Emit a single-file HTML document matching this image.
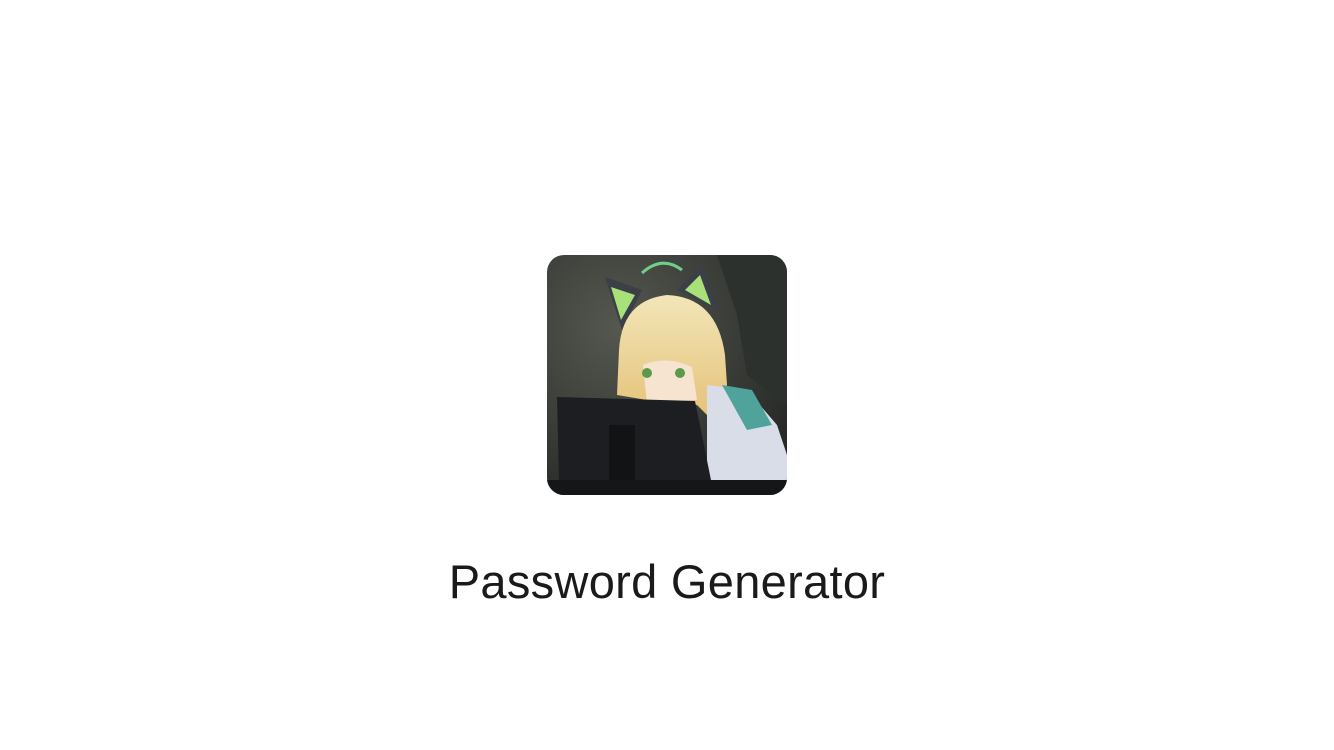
<!DOCTYPE html>
<html><head><style>
html,body{margin:0;padding:0;background:#fff;width:1334px;height:750px;overflow:hidden}
.icon{position:absolute;left:547px;top:255px;width:240px;height:240px;border-radius:17px;overflow:hidden}
.t{position:absolute;left:0;width:1334px;top:554px;text-align:center;font-family:"Liberation Sans",sans-serif;font-size:47px;color:#1a1a1a;font-weight:300;letter-spacing:0.3px}
</style></head><body>
<div class="icon"><svg width="240" height="240" viewBox="0 0 240 240">
<defs><radialGradient id="bg" cx="0.3" cy="0.3" r="0.9"><stop offset="0" stop-color="#55584f"/><stop offset="1" stop-color="#232524"/></radialGradient>
<linearGradient id="hair" x1="0" y1="0" x2="0" y2="1"><stop offset="0" stop-color="#f2e6b8"/><stop offset="1" stop-color="#e5c178"/></linearGradient></defs>
<rect width="240" height="240" fill="url(#bg)"/>
<path d="M170 0 L240 0 L240 150 L200 120 L190 60 Z" fill="#2c312e"/>
<path d="M95 18 Q115 0 135 15" stroke="#6fd08a" stroke-width="3" fill="none"/>
<path d="M58 22 L95 35 L75 75 Z" fill="#3a3f48"/><path d="M64 32 L88 40 L74 65 Z" fill="#a8e07a"/>
<path d="M130 35 L155 10 L172 55 Z" fill="#3a3f48"/><path d="M138 35 L153 20 L164 50 Z" fill="#a8e07a"/>
<path d="M72 95 Q75 45 120 40 Q170 42 178 100 L180 130 L165 165 L150 150 L100 145 L70 140 Z" fill="url(#hair)"/>
<path d="M96 110 Q120 100 145 112 L150 145 L100 148 Z" fill="#f6e4d0"/>
<circle cx="100" cy="118" r="5" fill="#5a9a4a"/><circle cx="133" cy="118" r="5" fill="#5a9a4a"/>
<path d="M160 130 L200 135 L230 170 L240 200 L240 240 L160 240 Z" fill="#d9dde8"/>
<path d="M175 130 L205 135 L225 170 L200 175 Z" fill="#4fa39a"/>
<path d="M10 142 L148 146 L165 230 L12 228 Z" fill="#1c1e21"/>
<rect x="62" y="170" width="26" height="60" fill="#121315"/>
<path d="M0 225 L240 225 L240 240 L0 240 Z" fill="#151618"/>
</svg></div>
<div class="t">Password Generator</div>
</body></html>
